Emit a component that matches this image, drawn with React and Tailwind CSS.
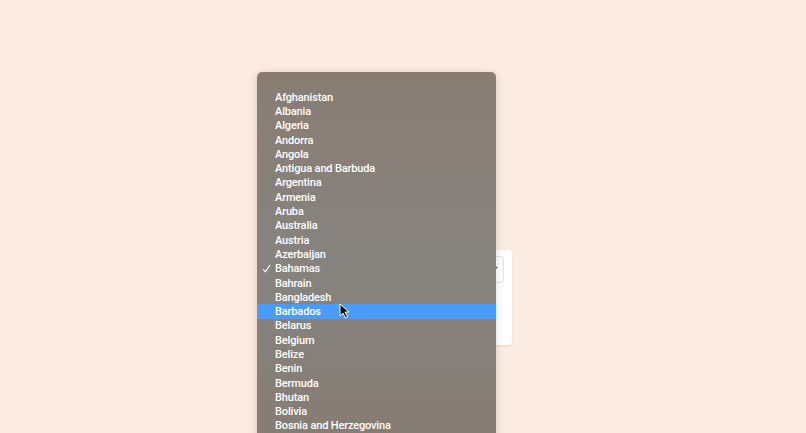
import React from 'react';

const countries = [
    'Afghanistan', 'Albania', 'Algeria', 'Andorra', 'Angola', 'Antigua and Barbuda',
    'Argentina', 'Armenia', 'Aruba', 'Australia', 'Austria', 'Azerbaijan', 'Bahamas',
    'Bahrain', 'Bangladesh', 'Barbados', 'Belarus', 'Belgium', 'Belize', 'Benin',
    'Bermuda', 'Bhutan', 'Bolivia', 'Bosnia and Herzegovina', 'Botswana', 'Brazil',
];

const selected = 'Bahamas';
const hovered = 'Barbados';

const Cursor = () => (
    <svg width="11" height="16" viewBox="0 0 11 16" className="absolute left-[82px] top-[-1px]">
        <path d="M1 1 L1 13 L4 10 L6.5 15 L8.5 14 L6 9 L10 9 Z" fill="#000" stroke="#fff" strokeWidth="1" strokeLinejoin="round" />
    </svg>
);

const App = () => {
    return (
        <div className="relative h-[433px] w-[806px] overflow-hidden bg-[#fbebe0]" style={{ fontFamily: 'Roboto, "Noto Sans", sans-serif' }}>
            {/* card behind the popup */}
            <div className="ml-[300px] pt-[250px]">
                <div className="relative h-[95px] w-[212px] rounded-[4px] bg-white shadow-[0_1px_3px_rgba(0,0,0,0.08)]">
                    <div className="absolute right-[8px] top-[6px] flex h-[27px] w-[40px] items-center justify-end rounded-[4px] border border-[#e2e2e2] bg-white pr-[4px]">
                        <svg width="8" height="8" viewBox="0 0 8 8">
                            <path d="M1 6 L6 1" stroke="#555" strokeWidth="1.6" />
                        </svg>
                    </div>
                </div>
            </div>

            {/* native select popup */}
            <div className="absolute left-[257px] top-[72px] w-[239px] rounded-[5px] bg-gradient-to-b from-[#897d73] via-[#86837f] to-[#867c73] pt-[18px] shadow-[0_2px_10px_rgba(0,0,0,0.15)]">
                {countries.map((name) => (
                    <div
                        key={name}
                        className={`relative flex h-[14.3px] items-center pl-[18px] text-[11px] font-medium leading-none tracking-[-0.15px] text-white ${name === hovered ? 'bg-[#4a9bfa]' : ''}`}
                    >
                        {name === selected && (
                            <svg width="9" height="9" viewBox="0 0 9 9" className="absolute left-[5px]">
                                <path d="M1 5 L3.3 7.8 L8 1" fill="none" stroke="#fff" strokeWidth="1.1" />
                            </svg>
                        )}
                        {name}
                        {name === hovered && <Cursor />}
                    </div>
                ))}
            </div>
        </div>
    );
};

export default App;
